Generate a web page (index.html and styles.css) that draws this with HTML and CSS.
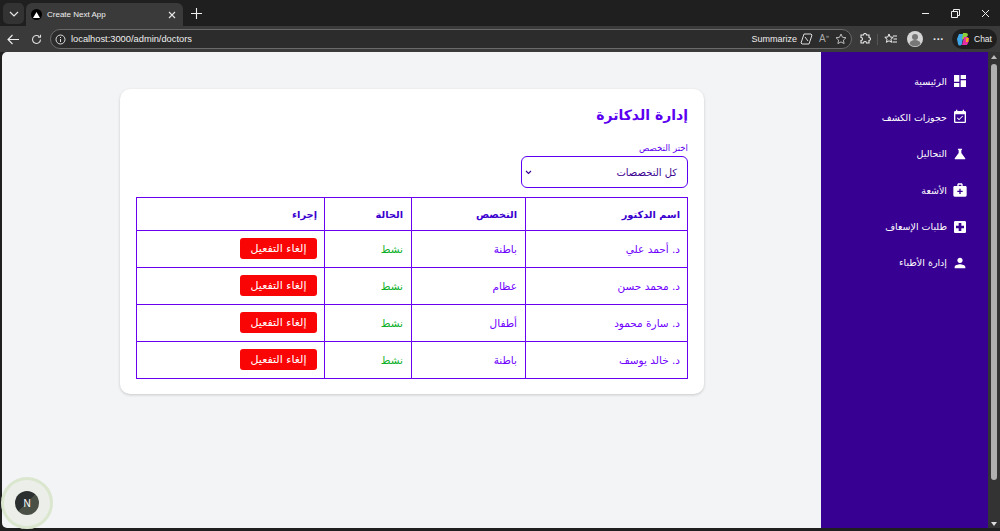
FILE: index.html
```html
<!DOCTYPE html>
<html lang="ar">
<head>
<meta charset="utf-8">
<title>Create Next App</title>
<link rel="stylesheet" href="styles.css">
</head>
<body>
<div class="window">
  <div class="tabstrip">
    <div class="tabmenu"><svg width="10" height="6" viewBox="0 0 10 6"><path d="M1 1l4 4 4-4" fill="none" stroke="#e8e8e8" stroke-width="1.2"/></svg></div>
    <div class="tab">
      <span class="favicon"><svg width="7" height="6" viewBox="0 0 7 6"><path d="M3.5 0L7 6H0z" fill="#fff"/></svg></span>
      <span class="tabtitle">Create Next App</span>
      <svg class="tabclose" width="8" height="8" viewBox="0 0 8 8"><path d="M1 1l6 6M7 1L1 7" stroke="#e8e8e8" stroke-width="1.1"/></svg>
    </div>
    <svg class="newtab" width="11" height="11" viewBox="0 0 11 11"><path d="M5.5 0v11M0 5.5h11" stroke="#f0f0f0" stroke-width="1.1"/></svg>
    <div class="winctl">
      <svg width="9" height="9" viewBox="0 0 9 9"><path d="M1 4.500h7" stroke="#eee"/></svg>
      <svg width="9" height="9" viewBox="0 0 9 9"><path d="M.5 2.500h6v6h-6zM2.500 2.500v-2h6v6h-2" fill="none" stroke="#eee"/></svg>
      <svg width="9" height="9" viewBox="0 0 9 9"><path d="M1 1l7 7M8 1L1 8" stroke="#eee"/></svg>
    </div>
  </div>
  <div class="toolbar">
    <svg class="tool-back" width="12" height="11" viewBox="0 0 12 11"><path d="M12 5.500H1M5.500 1L1 5.500 5.500 10" fill="none" stroke="#eee" stroke-width="1.1"/></svg>
    <svg class="tool-reload" width="11" height="11" viewBox="0 0 11 11"><path d="M9.500 5.500a4 4 0 1 1-1.200-2.900M9.500 .8v2.400H7.100" fill="none" stroke="#ddd" stroke-width="1.1"/></svg>
    <div class="urlbar">
      <svg class="url-info" width="11" height="11" viewBox="0 0 11 11"><circle cx="5.500" cy="5.500" r="4.500" fill="none" stroke="#ddd"/><path d="M5.500 5v3M5.500 3v1" stroke="#ddd"/></svg>
      <span class="url">localhost:3000/admin/doctors</span>
      <span class="summarize">Summarize</span>
      <svg width="13" height="12" viewBox="0 0 13 12"><path d="M4 1h7l1 1-3 9H2L1 10z" fill="none" stroke="#ddd"/><path d="M5 4l3 4" stroke="#ddd"/></svg>
      <span class="readaloud">A<sup>»</sup></span>
      <svg width="12" height="12" viewBox="0 0 12 12"><path d="M6 1l1.500 3.300 3.500.4-2.600 2.400.7 3.500L6 8.900 2.900 10.600l.7-3.500L1 4.700l3.500-.4z" fill="none" stroke="#bbb"/></svg>
    </div>
    <div class="tools-right">
      <svg width="12" height="12" viewBox="0 0 12 12"><path d="M4.500 2a1.500 1.500 0 0 1 3 0h2.500v2.500a1.500 1.500 0 0 1 0 3V10H7.500a1.500 1.500 0 0 0-3 0H2V7.500a1.500 1.500 0 0 0 0-3V2z" fill="none" stroke="#eee" stroke-width="1.1"/></svg>
      <span class="tooldiv"></span>
      <svg width="13" height="12" viewBox="0 0 13 12"><path d="M5 1l1.200 3 3 .3-2.300 2 .7 3L5 7.800 2.400 9.300l.7-3-2.300-2 3-.3zM9 3h4M9.500 6H13M8.500 9H13" fill="none" stroke="#eee"/></svg>
      <span class="avatar"><svg width="16" height="16" viewBox="0 0 16 16"><circle cx="8" cy="8" r="8" fill="#d5d5d5"/><circle cx="8" cy="6" r="3" fill="#777"/><path d="M2.500 13a5.500 4 0 0 1 11 0 8 8 0 0 1-11 0z" fill="#777"/></svg></span>
      <span class="dots">···</span>
      <span class="chat"><svg width="14" height="14" viewBox="0 0 14 14"><path d="M3 2h5L6 11a2 2 0 0 1-4 1L1 7z" fill="#3fa7e8"/><path d="M7 1h3a2 2 0 0 1 2 2L9 7H6z" fill="#8ccf3a"/><path d="M8 5h4l1 4-2 4H6z" fill="#e62ea5"/><path d="M10 6h3l-1 4h-2z" fill="#f7a21b"/></svg><span class="chat-label">Chat</span></span>
    </div>
  </div>
  <div class="viewport">
    <div class="page" dir="rtl">
      <nav class="sidebar">
        <a class="navitem"><svg class="navicon" viewBox="0 0 24 24"><path d="M3 13h8V3H3zm0 8h8v-6H3zm10 0h8V11h-8zm0-18v6h8V3z"/></svg>الرئيسية</a>
        <a class="navitem"><svg class="navicon" viewBox="0 0 24 24"><path d="M16.530 11.060L15.470 10l-4.880 4.880-2.120-2.120-1.060 1.060L10.590 17zM19 3h-1V1h-2v2H8V1H6v2H5c-1.110 0-2 .9-2 2v14a2 2 0 0 0 2 2h14c1.100 0 2-.9 2-2V5c0-1.100-.9-2-2-2zm0 16H5V8h14z"/></svg>حجوزات الكشف</a>
        <a class="navitem"><svg class="navicon" viewBox="0 0 24 24"><path d="M19.800 18.400L14 10.670V6.500l1.350-1.690c.26-.33.030-.81-.39-.81H9.040c-.42 0-.65.480-.39.810L10 6.500v4.170L4.200 18.400c-.49.660-.02 1.600.8 1.600h14c.82 0 1.290-.94.800-1.600z"/></svg>التحاليل</a>
        <a class="navitem"><svg class="navicon" viewBox="0 0 24 24"><path d="M20 6h-4V4c0-1.100-.9-2-2-2h-4c-1.100 0-2 .9-2 2v2H4c-1.100 0-2 .9-2 2v12c0 1.100.9 2 2 2h16c1.100 0 2-.9 2-2V8c0-1.100-.9-2-2-2zM10 4h4v2h-4zm6 11h-3v3h-2v-3H8v-2h3v-3h2v3h3z"/></svg>الأشعة</a>
        <a class="navitem"><svg class="navicon" viewBox="0 0 24 24"><path d="M19 3H5c-1.100 0-1.990.9-1.990 2L3 19c0 1.100.9 2 2 2h14c1.100 0 2-.9 2-2V5c0-1.100-.9-2-2-2zm-1 11h-4v4h-4v-4H6v-4h4V6h4v4h4z"/></svg>طلبات الإسعاف</a>
        <a class="navitem"><svg class="navicon" viewBox="0 0 24 24"><path d="M12 12c2.210 0 4-1.790 4-4s-1.790-4-4-4-4 1.790-4 4 1.790 4 4 4zm0 2c-2.670 0-8 1.340-8 4v2h16v-2c0-2.660-5.330-4-8-4z"/></svg>إدارة الأطباء</a>
      </nav>
      <main class="content">
        <section class="card">
          <h1 class="title">إدارة الدكاترة</h1>
          <label class="field-label">اختر التخصص</label>
          <div class="select">
            <span>كل التخصصات</span>
            <svg width="7" height="5" viewBox="0 0 7 5"><path d="M1 1l2.500 2.500L6 1" fill="none" stroke="#3a0090" stroke-width="1.100"/></svg>
          </div>
          <table class="table">
            <colgroup><col class="c1"><col class="c2"><col class="c3"><col></colgroup>
            <thead>
              <tr><th>اسم الدكتور</th><th>التخصص</th><th>الحالة</th><th>إجراء</th></tr>
            </thead>
            <tbody>
              <tr><td>د. أحمد علي</td><td>باطنة</td><td class="active">نشط</td><td><button class="btn">إلغاء التفعيل</button></td></tr>
              <tr><td>د. محمد حسن</td><td>عظام</td><td class="active">نشط</td><td><button class="btn">إلغاء التفعيل</button></td></tr>
              <tr><td>د. سارة محمود</td><td>أطفال</td><td class="active">نشط</td><td><button class="btn">إلغاء التفعيل</button></td></tr>
              <tr><td>د. خالد يوسف</td><td>باطنة</td><td class="active">نشط</td><td><button class="btn">إلغاء التفعيل</button></td></tr>
            </tbody>
          </table>
        </section>
      </main>
    </div>
    <div class="scrollbar"><span class="arrow-up"></span><span class="thumb"></span><span class="arrow-down"></span></div>
    <div class="nextbadge"><span class="nextdot">N</span></div>
  </div>
</div>
</body>
</html>
```

FILE: styles.css
```css
* { box-sizing: border-box; }
html, body { margin: 0; height: 100%; overflow: hidden; }
body { background: #1f1f1f; font-family: "DejaVu Sans", sans-serif; }
.window { width: 1000px; height: 531px; display: flex; flex-direction: column; background: #1f1f1f; }

.tabstrip { height: 26px; display: flex; align-items: flex-end; padding-left: 3px; flex: none; }
.tabmenu { width: 21px; height: 21px; margin-bottom: 2px; background: #333; border-radius: 5px; display: flex; align-items: center; justify-content: center; }
.tab { width: 157px; height: 23px; margin-left: 2px; background: #3a3a3a; border-radius: 6px 6px 0 0; display: flex; align-items: center; padding: 0 6px 0 5px; color: #f0f0f0; }
.favicon { width: 11px; height: 11px; border-radius: 50%; background: #000; display: flex; align-items: center; justify-content: center; }
.tabtitle { font: 8px "Liberation Sans", sans-serif; margin-left: 5px; flex: 1; }
.tabclose { margin-right: 1px; }
.newtab { margin: 0 0 7px 8px; }
.winctl { margin-left: auto; align-self: flex-start; display: flex; gap: 21px; padding: 9px 10px 0 0; }

.toolbar { height: 26px; flex: none; background: #3a3a3a; display: flex; align-items: center; padding: 0 3px 0 7px; }
.tool-reload { margin-left: 12px; flex: none; }
.tool-back { flex: none; }
.urlbar { flex: none; width: 802px; height: 20px; margin-left: 8px; border: 1px solid #6a6a6a; border-radius: 10px; background: #2c2c2c; display: flex; align-items: center; padding: 0 4px 0 4px; color: #eee; gap: 3px; }
.url { font: 9.300px "Liberation Sans", sans-serif; margin-left: 2px; margin-right: auto; }
.summarize { font: 9px "Liberation Sans", sans-serif; }
.readaloud { font: 10px "Liberation Sans", sans-serif; color: #aaa; margin: 0 3px; }
.readaloud sup { font-size: 6px; }
.tools-right { display: flex; align-items: center; margin-left: 7px; flex: 1; color: #eee; }
.tooldiv { width: 1px; height: 11px; background: #555; margin: 0 6px; }
.avatar { display: flex; margin-left: 10px; }
.dots { font: bold 11px "Liberation Sans", sans-serif; margin-left: 10px; }
.chat { margin-left: auto; width: 45px; height: 20px; padding: 0 5px 0 4px; background: #1f1f1f; border-radius: 10px; display: flex; align-items: center; gap: 4px; }
.chat-label { font: 8.500px "Liberation Sans", sans-serif; }

.viewport { position: relative; flex: none; height: 479px; display: flex; padding-left: 2px; padding-bottom: 3px; }
.page { flex: none; width: 986px; height: 476px; display: flex; overflow: hidden; border-radius: 5px 0 0 5px; background: #f3f4f6; }
.sidebar { flex: none; width: 167px; background: #370092; display: flex; flex-direction: column; padding: 19px 20px 0 0; gap: 16.400px; }
.navitem { display: flex; align-items: center; gap: 5px; height: 20px; color: #fff; font-size: 9.500px; }
.navicon { width: 16px; height: 16px; fill: #fff; flex: none; }
.content { flex: 1; padding: 37px 117px 0 0; }
.card { width: 584px; height: 305px; background: #fff; border-radius: 10px; box-shadow: 0 1px 3px rgba(0,0,0,.18); padding: 16px; color: #6200ea; }
.title { margin: 0; font-size: 14px; line-height: 20px; font-weight: 700; color: #5b00f0; }
.field-label { display: block; margin-top: 17px; font-size: 8.600px; line-height: 12px; color: #5b00f0; }
.select { width: 167px; height: 32px; margin-top: 2px; border: 1px solid #5b00f0; border-radius: 6px; display: flex; align-items: center; justify-content: space-between; padding: 0 10px 0 3px; font-size: 10px; color: #3a0090; }
.table { width: 552px; margin-top: 9px; border-collapse: collapse; table-layout: fixed; font-size: 10.500px; }
.c1 { width: 162px; } .c2 { width: 114px; } .c3 { width: 87px; }
.table th, .table td { border: 1px solid #6a00f0; padding: 0 8px; text-align: right; }
.table th:nth-child(1), .table td:nth-child(1), .table th:nth-child(4), .table td:nth-child(4) { padding-right: 7px; }
.table td:nth-child(4) { padding-bottom: 2px; }
.table th { height: 33px; font-size: 9.800px; font-weight: 700; color: #3a00d0; }
.table td { height: 37px; color: #7000ff; }
.table td.active { color: #0cb028; font-size: 10.500px; }
.btn { display: block; width: 77px; height: 21px; border: 0; border-radius: 3px; background: #fa0505; color: #fff; font: 11px "DejaVu Sans", sans-serif; padding: 0; }

.scrollbar { flex: none; width: 12px; height: 476px; background: #333; display: flex; flex-direction: column; align-items: center; padding: 3px 0 2px; }
.arrow-up { flex: none; width: 0; height: 0; border: 3px solid transparent; border-top: 0; border-bottom: 4px solid #bbb; margin: 0 0 5px; }
.thumb { flex: none; width: 6px; height: 416px; background: #b0b0b0; border-radius: 3px; }
.arrow-down { flex: none; width: 0; height: 0; margin-top: auto; border: 3px solid transparent; border-bottom: 0; border-top: 4px solid #ddd; }
.nextbadge { position: absolute; left: 1px; top: 425px; width: 52px; height: 52px; border-radius: 50%; border: 3px solid #dbe6cf; background: rgba(225,232,215,.4); display: flex; align-items: center; justify-content: center; }
.nextdot { width: 24px; height: 24px; border-radius: 50%; background: linear-gradient(135deg, #2b2f30 50%, #4a5045 50%); color: #fff; font: 10px "Liberation Sans", sans-serif; display: flex; align-items: center; justify-content: center; }
```
